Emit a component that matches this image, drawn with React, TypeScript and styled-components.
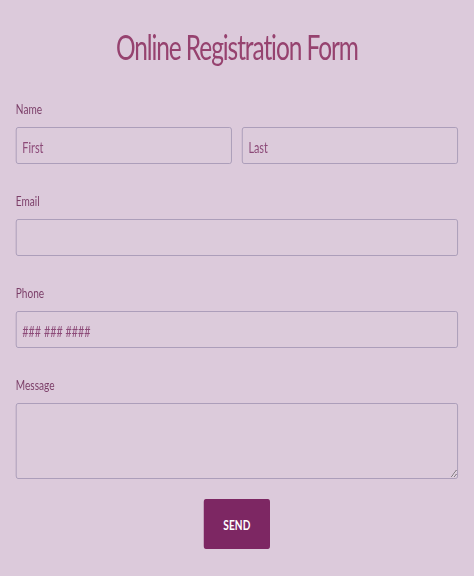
import styled, { createGlobalStyle } from "styled-components";

// The screenshot is horizontally squeezed, so the form is laid out at
// its natural width and the whole stage is squeezed the same way.
const SQUEEZE = 0.72;
const STAGE_WIDTH = Math.round(474 / SQUEEZE);

const GlobalStyle = createGlobalStyle`
  html, body {
    margin: 0;
    padding: 0;
    background: #dccadb;
    overflow: hidden;
  }
  * {
    box-sizing: border-box;
  }
`;

const App = () => {
  return (
    <>
      <GlobalStyle />
      <Stage>
        <Form onSubmit={(e) => e.preventDefault()}>
          <Title>Online Registration Form</Title>

          <Field>
            <Label>Name</Label>
            <Row>
              <Input type="text" placeholder="First" />
              <Input type="text" placeholder="Last" />
            </Row>
          </Field>

          <Field>
            <Label>Email</Label>
            <Input type="email" />
          </Field>

          <Field>
            <Label>Phone</Label>
            <Input type="tel" placeholder="### ### ####" />
          </Field>

          <Field>
            <Label>Message</Label>
            <TextArea />
          </Field>

          <Actions>
            <SendButton type="submit">SEND</SendButton>
          </Actions>
        </Form>
      </Stage>
    </>
  );
};

export default App;

const Stage = styled.div`
  width: ${STAGE_WIDTH}px;
  transform: scaleX(${SQUEEZE});
  transform-origin: 0 0;
  font-family: Lato, "Open Sans", sans-serif;
`;

const Form = styled.form`
  display: flex;
  flex-direction: column;
  gap: 28px;
  padding: 27px 22px 0 22px;
`;

const Title = styled.h1`
  margin: 0 0 5px;
  font-size: 34px;
  line-height: 40px;
  font-weight: 400;
  letter-spacing: -1.5px;
  text-align: center;
  color: #96426f;
`;

const Field = styled.div`
  display: flex;
  flex-direction: column;
`;

const Label = styled.label`
  font-size: 14px;
  line-height: 18px;
  color: #7c3f69;
  margin-bottom: 9px;
`;

const Row = styled.div`
  display: grid;
  grid-template-columns: 1fr 1fr;
  gap: 14px;
`;

const Input = styled.input`
  width: 100%;
  height: 37px;
  padding: 2px 8px 0;
  border: 1px solid #a497b4;
  border-radius: 3px;
  background: #dccbdb;
  font-family: Lato, "Open Sans", sans-serif;
  font-size: 15px;
  color: #6e3560;
  outline: none;

  &::placeholder {
    color: #8c4a78;
    opacity: 1;
  }
`;

const TextArea = styled.textarea`
  width: 100%;
  height: 76px;
  padding: 8px;
  border: 1px solid #a497b4;
  border-radius: 3px;
  background: #dccbdb;
  font-family: Lato, "Open Sans", sans-serif;
  font-size: 15px;
  color: #6e3560;
  outline: none;
  display: block;
`;

const Actions = styled.div`
  display: flex;
  justify-content: center;
  margin-top: -8px;
`;

const SendButton = styled.button`
  width: 92px;
  height: 50px;
  border: none;
  border-radius: 3px;
  background: #7d2763;
  color: #ffffff;
  font-family: Lato, "Open Sans", sans-serif;
  font-weight: 700;
  font-size: 14px;
  letter-spacing: 0.2px;
  cursor: pointer;
`;
